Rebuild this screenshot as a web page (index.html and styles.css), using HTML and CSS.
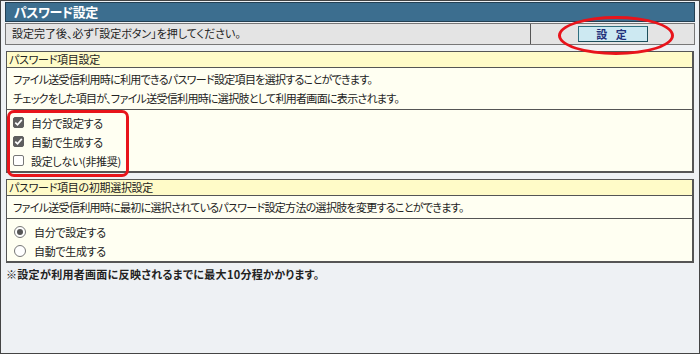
FILE: index.html
```html
<!DOCTYPE html>
<html lang="ja">
<head>
  <meta charset="UTF-8" />
  <meta name="viewport" content="width=device-width, initial-scale=1" />
  <title>パスワード設定</title>
  <link rel="stylesheet" href="styles.css">
</head>
<body>

<div class="frame">
  <div class="titlebar">パスワード設定</div>

  <div class="notice">
    <div class="notice-text">設定完了後、必ず「設定ボタン」を押してください。</div>
    <div class="notice-action"><button class="btn" type="button">設 定</button></div>
  </div>

  <!-- 項目設定 -->
  <section class="panel">
    <div class="panel-head">パスワード項目設定</div>
    <div class="panel-desc">
      <p>ファイル送受信利用時に利用できるパスワード設定項目を選択することができます。</p>
      <p>チェックをした項目が、ファイル送受信利用時に選択肢として利用者画面に表示されます。</p>
    </div>
    <div class="panel-opts">
      <label class="opt"><span class="cb on"><svg viewBox="0 0 11 11" width="11" height="11"><path d="M2.3 5.6 L4.5 7.8 L8.8 2.9" fill="none" stroke="#fff" stroke-width="1.7"/></svg></span>自分で設定する</label>
      <label class="opt"><span class="cb on"><svg viewBox="0 0 11 11" width="11" height="11"><path d="M2.3 5.6 L4.5 7.8 L8.8 2.9" fill="none" stroke="#fff" stroke-width="1.7"/></svg></span>自動で生成する</label>
      <label class="opt"><span class="cb"></span>設定しない(非推奨)</label>
    </div>
  </section>

  <!-- 初期選択設定 -->
  <section class="panel">
    <div class="panel-head">パスワード項目の初期選択設定</div>
    <div class="panel-desc">
      <p>ファイル送受信利用時に最初に選択されているパスワード設定方法の選択肢を変更することができます。</p>
    </div>
    <div class="panel-opts">
      <label class="opt radio"><span class="rb on"></span>自分で設定する</label>
      <label class="opt radio"><span class="rb"></span>自動で生成する</label>
    </div>
  </section>

  <p class="note">※設定が利用者画面に反映されるまでに最大10分程かかります。</p>

  <div class="mark mark-ring"></div>
  <div class="mark mark-box"></div>
</div>

</body>
</html>
```

FILE: styles.css
```css
:root {
  --bar: #3c6e8f; --page: #eef1f4; --gray: #e4e4e4;
  --head: #fffbc8; --body: #fffff2; --line: #555; --text: #222;
  --red: #e8141b;
}
* { box-sizing: border-box; }
body {
  margin: 0; background: #fff; color: var(--text);
  font-family: "Noto Sans CJK JP", "Noto Sans", sans-serif;
  font-size: 11px; font-feature-settings: "palt";
}
p { margin: 0; }
.frame {
  position: relative; width: 700px; height: 354px;
  border: 1px solid #444; background: var(--page);
  padding: 1px 4px 0 4px;
}
.titlebar {
  height: 20px; background: var(--bar); border: 1px solid #233f52;
  color: #fff; font-weight: bold; font-size: 13px; line-height: 17px;
  padding-left: 8px; letter-spacing: -0.5px;
}
.notice {
  display: flex; margin-top: 1px; height: 22px;
  border: 1px solid #777; background: var(--gray);
}
.notice-text { flex: 1; padding-left: 6px; line-height: 19px; border-right: 1px solid #555; }
.notice-action { width: 163px; display: flex; justify-content: center; align-items: center; }
.btn {
  width: 70px; height: 16px; padding: 0; margin-left: 1px;
  background: #cde9f2; border: 1px solid #2f6f7f; border-right-color: #1d4f5c; border-bottom-color: #1d4f5c;
  color: #22307a; font-family: inherit; font-weight: bold; font-size: 11px; line-height: 13px;
  letter-spacing: 3px;
}
.panel {
  margin: 6px 1px 0 1px; border: 1px solid var(--line);
  border-right-width: 2px; border-bottom-width: 2px; background: var(--body);
}
.panel-head {
  height: 16px; background: var(--head); border-bottom: 1px solid var(--line);
  padding-left: 2px; line-height: 15px; letter-spacing: -0.3px;
}
.panel-desc {
  padding: 2px 6px 1px; border-bottom: 1px solid var(--line); line-height: 19px;
  letter-spacing: -0.7px;
}
.panel-opts { padding: 3px 6px 1px; }
.opt { display: flex; align-items: center; height: 19px; letter-spacing: -0.3px; }
.cb {
  width: 11px; height: 11px; margin-right: 7px; border-radius: 2px;
  border: 1px solid #777; background: #fff; display: flex;
}
.cb.on { background: #5e5e5e; border-color: #5e5e5e; }
.cb svg { margin: -1px; }
.rb {
  width: 12px; height: 12px; margin: 0 8px 0 1px; border-radius: 50%;
  border: 1px solid #777; background: #fff; display: flex; align-items: center; justify-content: center;
}
.rb.on::after { content: ""; width: 6px; height: 6px; border-radius: 50%; background: #555; }
.note { margin-top: 2px; font-weight: bold; line-height: 19px; padding-left: 1px; letter-spacing: 0.3px; }
.mark { position: absolute; border: 3px solid var(--red); }
.mark-ring { left: 557px; top: 15px; width: 116px; height: 39px; border-radius: 50%; }
.mark-box { left: 6px; top: 109px; width: 122px; height: 67px; border-radius: 7px; }
```
